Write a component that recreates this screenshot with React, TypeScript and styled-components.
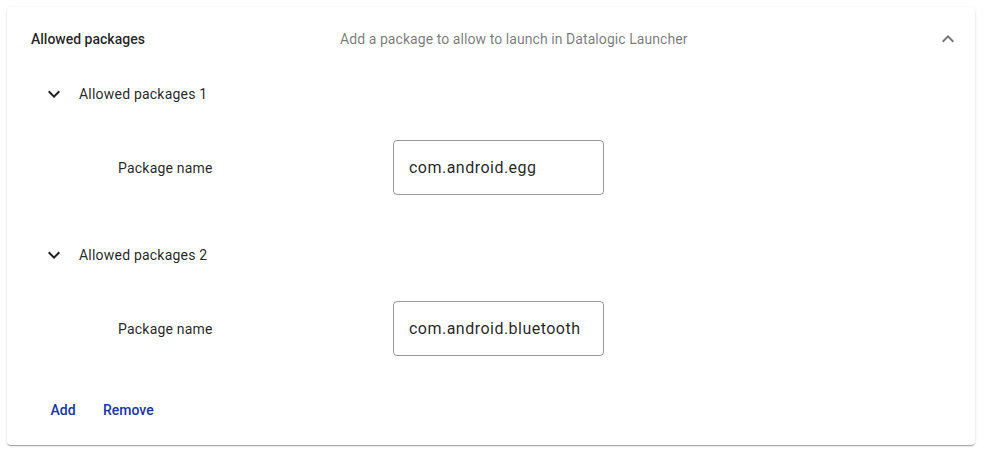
import React from "react";
import styled, { createGlobalStyle } from "styled-components";

const Global = createGlobalStyle`
  html, body { margin: 0; padding: 0; background: #ffffff; }
  body { font-family: Roboto, "Noto Sans", Arial, sans-serif; -webkit-font-smoothing: antialiased; }
  * { box-sizing: border-box; }
`;

const Page = styled.div`
  padding: 7px 8px 8px 7px;
`;

const Card = styled.section`
  background: #fff;
  border-radius: 4px;
  box-shadow: 0 2px 1px -1px rgba(0,0,0,0.2), 0 1px 1px 0 rgba(0,0,0,0.14), 0 1px 3px 0 rgba(0,0,0,0.12);
  padding-bottom: 17px;
`;

const Header = styled.div`
  height: 64px;
  display: flex;
  align-items: center;
  padding: 0 15px 0 24px;
`;

const Title = styled.div`
  width: 309px;
  font-size: 14px;
  font-weight: 500;
  color: rgba(0,0,0,0.87);
`;

const Description = styled.div`
  flex: 1;
  font-size: 14px;
  color: rgba(0,0,0,0.54);
  letter-spacing: 0.005em;
`;

const IconBox = styled.span<{ $color: string; $flip?: boolean }>`
  width: 24px;
  height: 24px;
  display: inline-flex;
  color: ${(p) => p.$color};
  transform: ${(p) => (p.$flip ? "rotate(180deg)" : "none")};
  svg { width: 24px; height: 24px; fill: currentColor; }
`;

const Chevron = ({ color, up }: { color: string; up?: boolean }) => (
  <IconBox $color={color} $flip={up}>
    <svg viewBox="0 0 24 24">
      <path d="M16.59 8.59L12 13.17 7.41 8.59 6 10l6 6 6-6z" />
    </svg>
  </IconBox>
);

const SubHeader = styled.div`
  height: 46px;
  display: flex;
  align-items: center;
  padding-left: 35px;
  gap: 13px;
`;

const SubTitle = styled.div`
  font-size: 14px;
  color: rgba(0,0,0,0.87);
  letter-spacing: 0.015em;
`;

const FieldRow = styled.div`
  display: flex;
  align-items: center;
  padding: 23px 0 37px 111px;
`;

const Label = styled.label`
  width: 275px;
  font-size: 14px;
  color: rgba(0,0,0,0.87);
  letter-spacing: 0.015em;
`;

const Input = styled.div`
  width: 211px;
  height: 55px;
  border: 1px solid rgba(0,0,0,0.4);
  border-radius: 4px;
  display: flex;
  align-items: center;
  padding: 0 15px;
  font-size: 16px;
  color: rgba(0,0,0,0.87);
  letter-spacing: 0.03em;
`;

const Actions = styled.div`
  display: flex;
  padding-left: 24px;
  margin-top: -1px;
`;

const TextButton = styled.button`
  min-width: 64px;
  height: 36px;
  padding: 6px 8px;
  border: none;
  background: transparent;
  font-family: inherit;
  font-size: 14px;
  font-weight: 500;
  color: #17369c;
  cursor: pointer;
`;

const items = [
  { title: "Allowed packages 1", value: "com.android.egg" },
  { title: "Allowed packages 2", value: "com.android.bluetooth" },
];

export default function App() {
  return (
    <Page>
      <Global />
      <Card>
        <Header>
          <Title>Allowed packages</Title>
          <Description>Add a package to allow to launch in Datalogic Launcher</Description>
          <Chevron color="rgba(0,0,0,0.54)" up />
        </Header>
        {items.map((it) => (
          <div key={it.title}>
            <SubHeader>
              <Chevron color="rgba(0,0,0,0.87)" />
              <SubTitle>{it.title}</SubTitle>
            </SubHeader>
            <FieldRow>
              <Label>Package name</Label>
              <Input>{it.value}</Input>
            </FieldRow>
          </div>
        ))}
        <Actions>
          <TextButton>Add</TextButton>
          <TextButton>Remove</TextButton>
        </Actions>
      </Card>
    </Page>
  );
}
